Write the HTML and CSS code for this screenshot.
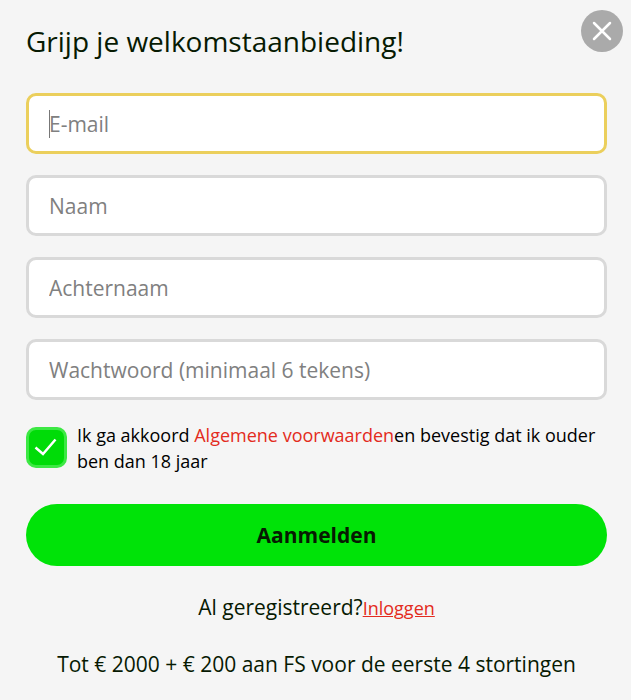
FILE: index.html
```html
<!DOCTYPE html>
<html lang="nl">
<head>
<meta charset="utf-8">
<meta name="viewport" content="width=device-width, initial-scale=1">
<title>Aanmelden</title>
<link rel="stylesheet" href="styles.css">
</head>
<body>
<main class="dialog">
  <button class="close" type="button" aria-label="Sluiten">
    <svg viewBox="0 0 42 42" aria-hidden="true"><path d="M13 13l16 16M29 13l-16 16"/></svg>
  </button>
  <h1 class="title">Grijp je welkomstaanbieding!</h1>
  <form class="form">
    <div class="fields">
      <input class="field field-active" type="email" placeholder="E-mail" aria-label="E-mail">
      <input class="field" type="text" placeholder="Naam" aria-label="Naam">
      <input class="field" type="text" placeholder="Achternaam" aria-label="Achternaam">
      <input class="field" type="password" placeholder="Wachtwoord (minimaal 6 tekens)" aria-label="Wachtwoord">
    </div>
    <div class="terms">
      <span class="check">
        <input class="check-input" id="terms" type="checkbox" checked>
        <svg class="check-mark" viewBox="0 0 41 41" aria-hidden="true"><path d="M9.500 20.500l7.500 6.500L29.500 12.500"/></svg>
      </span>
      <label class="terms-text" for="terms">Ik ga akkoord <a class="terms-link" href="#">Algemene voorwaarden</a>en bevestig dat ik ouder ben dan 18 jaar</label>
    </div>
    <button class="submit" type="submit">Aanmelden</button>
  </form>
  <div class="notes">
    <p class="note">Al geregistreerd?<a class="login" href="#">Inloggen</a></p>
    <p class="note">Tot € 2000 + € 200 aan FS voor de eerste 4 stortingen</p>
  </div>
</main>
</body>
</html>
```
FILE: styles.css
```css
* {
  box-sizing: border-box;
}

body {
  margin: 0;
  background: #f5f5f5;
  color: #071a02;
  font-family: "Open Sans", "Noto Sans", sans-serif;
}

.dialog {
  position: relative;
  padding: 21px 24px 20px 26px;
}

.close {
  position: absolute;
  top: 10px;
  right: 8px;
  width: 42px;
  height: 42px;
  padding: 0;
  border: 0;
  border-radius: 50%;
  background: #aaa;
}

.close svg {
  display: block;
  fill: none;
  stroke: #fff;
  stroke-width: 2.5;
  stroke-linecap: round;
}

.title {
  margin: 0 0 32px;
  font-size: 28px;
  font-weight: 400;
  line-height: 40px;
}

.fields {
  display: grid;
  gap: 21px;
}

.field {
  width: 100%;
  height: 61px;
  padding: 0 20px;
  border: 3px solid #d9d9d9;
  border-radius: 10px;
  outline: 0;
  background: #fff;
  color: #071a02;
  font: 21px "Open Sans", "Noto Sans", sans-serif;
}

.field::placeholder {
  color: #808080;
  opacity: 1;
}

.field-active {
  border-color: #ebcf5c;
  background: linear-gradient(#777, #777) 20px center / 1px 28px no-repeat #fff;
}

.terms {
  display: flex;
  gap: 10px;
  margin-top: 22px;
}

.check {
  position: relative;
  flex: none;
  width: 41px;
  height: 41px;
  margin-top: 5px;
}

.check-input {
  appearance: none;
  display: block;
  width: 100%;
  height: 100%;
  margin: 0;
  border: 3px solid #3de844;
  border-radius: 10px;
  background: #00dc08;
}

.check-mark {
  position: absolute;
  inset: 0;
  fill: none;
  stroke: #fff;
  stroke-width: 2.5;
  pointer-events: none;
}

.terms-text {
  color: #000;
  font-size: 18px;
  line-height: 26px;
}

.terms-link,
.login {
  color: #e32b20;
  font-size: 18px;
}

.terms-link {
  text-decoration: none;
}

.submit {
  display: block;
  width: 100%;
  height: 62px;
  margin-top: 30px;
  border: 0;
  border-radius: 31px;
  background: #00e308;
  color: #071a02;
  font: 700 21px "Open Sans", "Noto Sans", sans-serif;
}

.notes {
  display: grid;
  gap: 28px;
  margin-top: 27px;
}

.note {
  margin: 0;
  font-size: 21px;
  line-height: 28px;
  text-align: center;
}
```
